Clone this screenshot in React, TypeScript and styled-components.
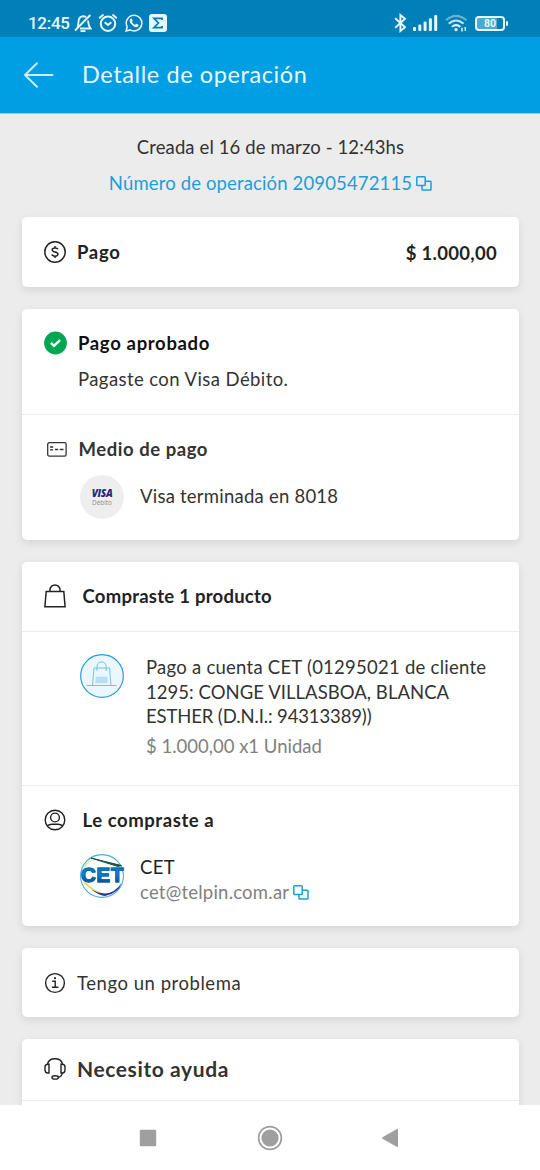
import React from "react";
import styled, { createGlobalStyle } from "styled-components";

const GlobalStyle = createGlobalStyle`
  * { box-sizing: border-box; }
  body { margin: 0; background: #ececec; font-family: Lato, "Liberation Sans", sans-serif; }
  svg { display: block; flex: none; }
`;

const Screen = styled.div`
  display: flex;
  flex-direction: column;
  width: 540px;
  height: 1170px;
  overflow: hidden;
  background: #ececec;
`;

const StatusBar = styled.header`
  display: flex;
  flex: none;
  justify-content: space-between;
  height: 37px;
  padding: 9px 32px 0 28px;
  background: #007fb8;
  color: #e6f7fd;
`;

const StatusGroup = styled.div<{ $gap: number }>`
  display: flex;
  align-items: center;
  gap: ${(p) => p.$gap}px;
  height: 28px;
`;

const Clock = styled.span`
  width: 41px;
  margin-right: -2px;
  font: 500 17px/28px Roboto, sans-serif;
  letter-spacing: -0.3px;
  white-space: nowrap;
`;

const AppBar = styled.div`
  display: flex;
  flex: none;
  align-items: center;
  gap: 28px;
  height: 77px;
  padding: 0 23px;
  background: #009ee3;
  border-bottom: 1px solid #8fcdea;
`;

const Title = styled.h1`
  margin: 0 0 3px;
  color: #e9f9ff;
  font-size: 23.5px;
  font-weight: 400;
  line-height: 30px;
  letter-spacing: 0.6px;
  white-space: nowrap;
`;

const Content = styled.main`
  flex: 1;
  min-height: 0;
  overflow: hidden;
  padding: 15px 21px 0 22px;
`;

const Summary = styled.section`
  display: flex;
  flex-direction: column;
  align-items: center;
  gap: 6px;
  margin-bottom: 22px;
`;

const Line = styled.p<{
  $size?: number;
  $weight?: number;
  $color?: string;
  $spacing?: number;
  $height?: number;
}>`
  margin: 0;
  color: ${(p) => p.$color ?? "#333"};
  font-size: ${(p) => p.$size ?? 18.5}px;
  font-weight: ${(p) => p.$weight ?? 400};
  line-height: ${(p) => p.$height ?? 24}px;
  letter-spacing: ${(p) => p.$spacing ?? 0}px;
  white-space: nowrap;
`;

const CopyRow = styled.div<{ $gap: number }>`
  display: flex;
  align-items: center;
  gap: ${(p) => p.$gap}px;
`;

const Card = styled.section<{ $height: number }>`
  display: flex;
  flex-direction: column;
  height: ${(p) => p.$height}px;
  margin-bottom: 22px;
  overflow: hidden;
  background: #fff;
  border-radius: 5px;
  box-shadow: 0 3px 8px rgba(0, 0, 0, 0.1);
`;

const Section = styled.div<{ $height: number; $top: number; $divider?: boolean }>`
  flex: none;
  height: ${(p) => p.$height}px;
  padding: ${(p) => p.$top}px 22px 0;
  border-bottom: ${(p) => (p.$divider ? "1px solid #ebebeb" : "0")};
`;

const Heading = styled.div`
  display: flex;
  align-items: center;
`;

const IconSlot = styled.span<{ $width: number }>`
  display: flex;
  flex: none;
  width: ${(p) => p.$width}px;
`;

const Amount = styled.div`
  margin: 2px 0 0 auto;
`;

const Indent = styled.div<{ $left: number; $top: number }>`
  padding: ${(p) => p.$top}px 0 0 ${(p) => p.$left}px;
`;

const Detail = styled.div<{ $gap: number; $top: number }>`
  display: flex;
  align-items: flex-start;
  gap: ${(p) => p.$gap}px;
  padding: ${(p) => p.$top}px 0 0 36px;
`;

const DetailText = styled.div<{ $top: number }>`
  padding-top: ${(p) => p.$top}px;
`;

const CardBrand = styled.div`
  display: flex;
  flex: none;
  flex-direction: column;
  align-items: center;
  width: 44px;
  height: 44px;
  padding-top: 13px;
  background: #eeeeee;
  border-radius: 50%;
`;

const BrandName = styled.span`
  color: #1b2a83;
  font: italic 800 10px/11px "Open Sans", sans-serif;
  letter-spacing: -0.3px;
`;

const BrandKind = styled.span`
  color: #8b8b8b;
  font: 400 6.4px/7px "Open Sans", sans-serif;
`;

const NavBar = styled.nav`
  display: flex;
  flex: none;
  align-items: center;
  height: 65px;
  padding-left: 139px;
  background: #fff;
`;

const HomeButton = styled.span`
  margin: 0 98px 0 100px;
`;

function BellOff() {
  return (
    <svg width="18" height="20" viewBox="0 0 18 20" fill="none" stroke="currentColor" strokeWidth="1.9">
      <path d="M3.6 14.5 C4.8 12 3.6 7 6 4.5 Q9 2 12 4.3 M14 7.5 C14.3 11 14.5 13 16.6 15.5 H6" />
      <path d="M1 17.5 16.3 2" />
      <path d="M6.5 18.1 h5" />
    </svg>
  );
}

function Alarm() {
  return (
    <svg width="20" height="20" viewBox="0 0 20 20" fill="none" stroke="currentColor" strokeWidth="2">
      <circle cx="10" cy="10.8" r="7.2" />
      <path d="M1.2 5.3 5.5 1.6 M18.8 5.3 14.5 1.6" />
      <path d="M6.7 9.2 10 12 13.3 9.2" />
    </svg>
  );
}

function WhatsApp() {
  return (
    <svg width="18" height="18" viewBox="0 0 18 18" fill="none" stroke="currentColor">
      <path strokeWidth="1.5" d="M1.1 17 2.2 12.8 A7.8 7.8 0 1 1 5.3 15.9 Z" />
      <path fill="currentColor" stroke="none" d="M6 4.4 C4 5.5 4.4 8 6.7 10.6 C9.2 13.4 11.8 14 13.3 12 C13.7 11.2 13.5 10.9 13 10.6 L11.3 9.8 C10.8 9.6 10.5 11 9.9 10.8 C8.6 10.3 7.4 9 7 8 C7 7.5 8 7.2 7.6 6.5 L6.9 4.8 Q6.6 4.2 6 4.4Z" />
    </svg>
  );
}

function Sigma() {
  return (
    <svg width="18" height="18" viewBox="0 0 18 18">
      <rect width="18" height="18" rx="3" fill="currentColor" />
      <path d="M13 6 V4.3 H5 L9.4 9 5 13.6 H13 V12" fill="none" stroke="#007fb8" strokeWidth="1.8" />
    </svg>
  );
}

function Bluetooth() {
  return (
    <svg width="13" height="20" viewBox="0 0 13 20" fill="none" stroke="currentColor" strokeWidth="1.9">
      <path d="M1.2 5.3 11 14.2 6.4 18 V2 L11 5.8 1.2 14.7" />
    </svg>
  );
}

function Signal() {
  return (
    <svg width="25" height="16" viewBox="0 0 25 16" fill="currentColor">
      <rect x="0" y="12" width="3" height="4" rx="1" />
      <rect x="5.3" y="9.5" width="3" height="6.5" rx="1" />
      <rect x="10.6" y="6.5" width="3" height="9.5" rx="1" />
      <rect x="15.9" y="3.3" width="3" height="12.7" rx="1" />
      <rect x="21.2" y="0" width="3" height="16" rx="1" />
    </svg>
  );
}

function Wifi() {
  return (
    <svg width="23" height="18" viewBox="0 0 23 18" fill="none" stroke="currentColor" strokeWidth="2.1">
      <path opacity="0.45" d="M1 6.3 Q11 -2.6 21.5 6.3" />
      <path d="M3.8 9.6 Q11 3.4 18.5 9.6" opacity="0.85" />
      <path d="M7 12.8 Q11 9.5 15.3 12.8" />
      <circle cx="11" cy="15.6" r="1.6" fill="currentColor" stroke="none" />
      <path strokeWidth="1.5" d="M17 13.7 V17.4 M20.3 13 V16.8" />
    </svg>
  );
}

const Battery = styled.div`
  position: relative;
  width: 30px;
  height: 15px;
  margin: 0 3px 0 1px;
  border: 2px solid currentColor;
  border-radius: 4px;
  background: linear-gradient(90deg, #4ba9d3 0 76%, transparent 76%);
  font: 700 10.5px/11.5px Roboto, sans-serif;
  text-align: center;
  &::after {
    content: "";
    position: absolute;
    right: -5px;
    top: 3px;
    width: 2px;
    height: 5px;
    border-radius: 1px;
    background: currentColor;
  }
`;

function Back() {
  return (
    <svg width="31" height="26" viewBox="0 0 31 26" fill="none" stroke="#c9f0fd" strokeWidth="1.9" strokeLinecap="round" strokeLinejoin="round">
      <path d="M14 1.2 2 13 14 24.8 M2 13 H29.5" />
    </svg>
  );
}

function Copy() {
  return (
    <svg width="16" height="15" viewBox="0 0 16 15" fill="none" stroke="#1a9fda" strokeWidth="1.5">
      <rect x="0.8" y="0.8" width="8.4" height="8.7" rx="0.8" />
      <path d="M9.2 5.2 H14.2 Q15 5.2 15 6 V13.2 Q15 14 14.2 14 H6.8 Q6 14 6 13.2 V9.5" />
    </svg>
  );
}

function Dollar() {
  return (
    <svg width="22" height="22" viewBox="0 0 22 22" fill="none" stroke="#222" strokeWidth="1.5">
      <circle cx="11" cy="11" r="10.2" />
      <path d="M14 8.3 C13.4 6.7 8.2 6.2 8.2 8.9 C8.2 11.5 14 10.3 14 13.1 C14 16 8.5 15.5 7.9 13.5 M11 4.9 V6.8 M11 15.1 V17.1" />
    </svg>
  );
}

function Approved() {
  return (
    <svg width="24" height="24" viewBox="0 0 24 24">
      <circle cx="11.5" cy="12" r="11.4" fill="#00a650" />
      <path d="M6.9 11.8 10 14.9 16 9.2" fill="none" stroke="#fff" strokeWidth="2.4" />
    </svg>
  );
}

function PaymentCard() {
  return (
    <svg width="20" height="15" viewBox="0 0 20 15" fill="none" stroke="#333" strokeWidth="1.3">
      <rect x="0.7" y="0.7" width="18.4" height="13.4" rx="1.6" />
      <path d="M3 5 H6.2 M3 7.8 H6.2 M8 7.5 H11.2 M12.8 7.5 H16.5" />
    </svg>
  );
}

function Bag() {
  return (
    <svg width="22" height="24" viewBox="0 0 22 24" fill="none" stroke="#222" strokeWidth="1.5">
      <path d="M2.2 7.5 H19.8 L21.1 22.8 H0.9 Z M5.9 7.5 V6 A5.1 5.1 0 0 1 16.1 6 V7.5" />
    </svg>
  );
}

function ProductBadge() {
  return (
    <svg width="44" height="44" viewBox="0 0 44 44" fill="none" stroke="#72c2ea" strokeWidth="1">
      <circle cx="22" cy="22" r="21.3" fill="#eaf7fd" stroke="#259dd8" strokeWidth="1.2" />
      <path d="M14 14 H29.5 L31 31.5 H12.5 Z M17 17 V12.5 A4.6 4.6 0 0 1 26.2 12.5 V17 M6.5 31.5 H36.5" />
      <path d="M15.8 22.7 H27.5 V29.2 H15.2 Z" fill="#b5dff6" stroke="none" />
    </svg>
  );
}

function Person() {
  return (
    <svg width="22" height="22" viewBox="0 0 22 22" fill="none" stroke="#222" strokeWidth="1.4">
      <circle cx="11" cy="11" r="9.8" />
      <circle cx="11" cy="8.5" r="4.4" />
      <path d="M3.2 17 Q5 15.2 8 15.2 H14 Q17 15.2 18.8 17" />
    </svg>
  );
}

const SellerLogo = styled.div`
  position: relative;
  flex: none;
  width: 44px;
  height: 44px;
`;

const LogoText = styled.span`
  position: absolute;
  left: 1px;
  top: 9px;
  color: transparent;
  background: linear-gradient(#0a76c2 15%, #0c8bd3 45%, #07417f 85%);
  background-clip: text;
  font: 700 20.5px/24px "Liberation Sans", sans-serif;
  -webkit-text-stroke: 1px #0b66ad;
  letter-spacing: 0.7px;
  white-space: nowrap;
`;

function Seller() {
  return (
    <SellerLogo>
      <svg width="44" height="44" viewBox="0 0 44 44" fill="none">
        <circle cx="22" cy="22" r="21.4" fill="#fff" stroke="#48abe1" strokeWidth="1.1" />
        <path d="M14 4.5 Q5 8 5 16" stroke="#e8ef98" strokeWidth="1.6" />
        <path d="M11 4 Q25 7.5 41.5 11.5 L38 12.5 Q25 8.5 11 4Z" fill="#145545" stroke="#145545" />
        <path d="M4 28 Q14 38 25 41.5" stroke="#e9db60" strokeWidth="1.8" />
        <path d="M11 35 Q18 41 25 42 Q39 39 41.5 29 Q35 39 25 39.5 Q17 39 11 35Z" fill="#243b91" />
      </svg>
      <LogoText>CET</LogoText>
    </SellerLogo>
  );
}

function Info() {
  return (
    <svg width="22" height="22" viewBox="0 0 22 22" fill="none" stroke="#222" strokeWidth="1.4">
      <circle cx="11" cy="11" r="9.4" />
      <path d="M8.2 9.2 H11.2 V15.2 M7.9 15.2 H14.4" />
      <circle cx="11" cy="6.2" r="1.1" fill="#222" stroke="none" />
    </svg>
  );
}

function Headset() {
  return (
    <svg width="22" height="22" viewBox="0 0 22 22" fill="none" stroke="#222" strokeWidth="1.4">
      <path d="M3.5 6.2 C5 -1 17 -1 18.5 6.2 M5 6.2 V15 H3.8 Q1 15 1 12 V9.2 Q1 6.2 3.8 6.2 Z M17 6.2 V15 H18.2 Q21 15 21 12 V9.2 Q21 6.2 18.2 6.2 Z M18.3 15 Q18 18.5 14.3 19.2" />
      <ellipse cx="11.2" cy="19.4" rx="3.2" ry="1.7" />
    </svg>
  );
}

export default function App() {
  return (
    <Screen>
      <GlobalStyle />
      <StatusBar>
        <StatusGroup $gap={6.5}>
          <Clock>12:45</Clock>
          <BellOff />
          <Alarm />
          <WhatsApp />
          <Sigma />
        </StatusGroup>
        <StatusGroup $gap={6.5}>
          <Bluetooth />
          <Signal />
          <Wifi />
          <Battery>80</Battery>
        </StatusGroup>
      </StatusBar>
      <AppBar>
        <Back />
        <Title>Detalle de operación</Title>
      </AppBar>
      <Content>
        <Summary>
          <Line $height={36} $spacing={0.11}>Creada el 16 de marzo - 12:43hs</Line>
          <CopyRow $gap={4}>
            <Line $color="#1a9fda" $spacing={0.14}>Número de operación 20905472115</Line>
            <Copy />
          </CopyRow>
        </Summary>

        <Card $height={70}>
          <Section $height={70} $top={22}>
            <Heading>
              <IconSlot $width={33}><Dollar /></IconSlot>
              <Line $weight={700} $color="#222" $spacing={0.7}>Pago</Line>
              <Amount><Line $weight={700} $color="#222" $spacing={0.3}>$ 1.000,00</Line></Amount>
            </Heading>
          </Section>
        </Card>

        <Card $height={231}>
          <Section $height={106} $top={22} $divider>
            <Heading>
              <IconSlot $width={34}><Approved /></IconSlot>
              <Line $weight={700} $color="#111" $spacing={0.66}>Pago aprobado</Line>
            </Heading>
            <Indent $left={34} $top={12}>
              <Line $spacing={0.42}>Pagaste con Visa Débito.</Line>
            </Indent>
          </Section>
          <Section $height={125} $top={22}>
            <Heading>
              <IconSlot $width={34.5}><Indent $left={3} $top={0}><PaymentCard /></Indent></IconSlot>
              <Line $weight={700} $spacing={0.55}>Medio de pago</Line>
            </Heading>
            <Detail $gap={16} $top={14}>
              <CardBrand>
                <BrandName>VISA</BrandName>
                <BrandKind>Débito</BrandKind>
              </CardBrand>
              <DetailText $top={9}>
                <Line $spacing={0.23}>Visa terminada en 8018</Line>
              </DetailText>
            </Detail>
          </Section>
        </Card>

        <Card $height={364}>
          <Section $height={70} $top={22} $divider>
            <Heading>
              <IconSlot $width={38.5}><Bag /></IconSlot>
              <Line $weight={700} $color="#222" $spacing={0.25}>Compraste 1 producto</Line>
            </Heading>
          </Section>
          <Section $height={154} $top={22} $divider>
            <Detail $gap={22} $top={0}>
              <ProductBadge />
              <DetailText $top={1}>
                <Line $height={24.7} $spacing={0.25}>Pago a cuenta CET (01295021 de cliente</Line>
                <Line $height={24.7} $spacing={0.05}>1295: CONGE VILLASBOA, BLANCA</Line>
                <Line $height={24.7} $spacing={-0.13}>ESTHER (D.N.I.: 94313389))</Line>
                <Line $height={35} $color="#808080">$ 1.000,00 x1 Unidad</Line>
              </DetailText>
            </Detail>
          </Section>
          <Section $height={140} $top={22}>
            <Heading>
              <IconSlot $width={38.5}><Person /></IconSlot>
              <Line $weight={700} $color="#222" $spacing={0.57}>Le compraste a</Line>
            </Heading>
            <Detail $gap={16} $top={22}>
              <Seller />
              <DetailText $top={1}>
                <Line $height={25} $color="#222" $spacing={0.3}>CET</Line>
                <CopyRow $gap={4}>
                  <Line $height={25} $color="#808080" $spacing={0.23}>cet@telpin.com.ar</Line>
                  <Copy />
                </CopyRow>
              </DetailText>
            </Detail>
          </Section>
        </Card>

        <Card $height={69}>
          <Section $height={69} $top={23}>
            <Heading>
              <IconSlot $width={33}><Info /></IconSlot>
              <Line $spacing={0.54}>Tengo un problema</Line>
            </Heading>
          </Section>
        </Card>

        <Card $height={90}>
          <Section $height={62} $top={18} $divider>
            <Heading>
              <IconSlot $width={33}><Headset /></IconSlot>
              <Line $weight={700} $size={21} $spacing={0.6}>Necesito ayuda</Line>
            </Heading>
          </Section>
          <Section $height={5} $top={0} $divider />
        </Card>
      </Content>
      <NavBar>
        <svg width="18" height="18" viewBox="0 0 18 18"><rect x="0.8" y="0.8" width="16.4" height="16.4" rx="1" fill="#9f9f9f" /></svg>
        <HomeButton>
          <svg width="26" height="26" viewBox="0 0 26 26"><circle cx="13" cy="13" r="11.4" fill="none" stroke="#9f9f9f" strokeWidth="1.7" /><circle cx="13" cy="13" r="8.6" fill="#9f9f9f" /></svg>
        </HomeButton>
        <svg width="18" height="20" viewBox="0 0 18 20"><path d="M1.5 9.3 Q0.7 10 1.5 10.7 L16 19 Q17 19.3 17 18.4 V1.6 Q17 0.7 16 1 Z" fill="#9f9f9f" /></svg>
      </NavBar>
    </Screen>
  );
}
